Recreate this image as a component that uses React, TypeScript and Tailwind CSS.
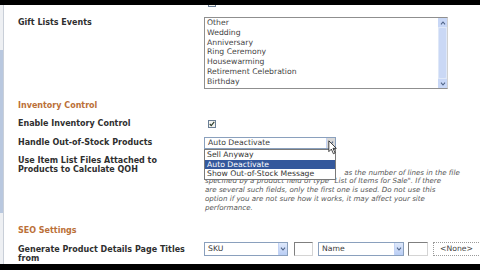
import React from 'react';

const events = ['Other', 'Wedding', 'Anniversary', 'Ring Ceremony', 'Housewarming', 'Retirement Celebration', 'Birthday'];

const font = "font-['DejaVu_Sans',Verdana,sans-serif]";

function Checkbox({ checked = false }: { checked?: boolean }) {
  return (
    <span className="flex h-[8px] w-[8px] items-center justify-center border border-[#6b7f96] bg-[#f4f4f0]">
      {checked && (
        <svg viewBox="0 0 8 8" className="h-[6px] w-[6px]">
          <path d="M1 4 L3 6.2 L7 1.2" fill="none" stroke="#2b3b2b" strokeWidth="1.5" />
        </svg>
      )}
    </span>
  );
}

function ArrowButton({ pressed = false }: { pressed?: boolean }) {
  return (
    <span
      className={`flex w-[9px] items-center justify-center self-stretch border-l border-[#c3d3f5] ${
        pressed ? 'bg-[#d8d8d8]' : 'bg-gradient-to-b from-[#dfe9fb] to-[#b9cdf4]'
      }`}
    >
      <svg viewBox="0 0 8 6" className="h-[4px] w-[6px]">
        <path d="M1 1 L4 4.5 L7 1" fill="none" stroke="#4d6185" strokeWidth="1.6" />
      </svg>
    </span>
  );
}

function Select({ value, className = '', pressed = false }: { value: string; className?: string; pressed?: boolean }) {
  return (
    <div className={`flex border border-[#8aa0bd] bg-white ${className}`}>
      <span className="flex-1 truncate pl-[3px] text-[7.7px] text-[#3a3a3a]">{value}</span>
      <ArrowButton pressed={pressed} />
    </div>
  );
}

export default function App() {
  return (
    <div className={`flex h-[270px] w-[480px] flex-col overflow-hidden bg-black ${font}`}>
      <div className="h-[5px] shrink-0 bg-black" />

      <div className="relative flex min-h-0 flex-1 overflow-hidden bg-white">
        {/* frame edge */}
        <div className="flex w-[4px] shrink-0 flex-col border-r border-[#c9cfd8] bg-[#eef0f3]">
          <div className="h-[45px]" />
          <div className="h-[163px] w-[3px] bg-[#b9c8df]" />
        </div>

        <div className="flex flex-1 flex-col pl-[14px] text-[#2f2f2f]">
          {/* Enable Gift Lists (cut off) */}
          <div className="mt-[-7px] grid grid-cols-[186px_1fr] items-center leading-[10px]">
            <span className="text-[8px] font-bold">Enable Gift Lists</span>
            <span className="pl-[4px]"><Checkbox /></span>
          </div>

          {/* Gift Lists Events */}
          <div className="mt-[9px] grid grid-cols-[186px_1fr]">
            <span className="pt-[1px] text-[8px] font-bold leading-[10px]">Gift Lists Events</span>
            <div className="flex h-[72px] w-[244px] border border-[#8f8f8f] border-r-[#d0d0d0] bg-white">
              <ul className="flex-1 pl-[2px] text-[7.7px] leading-[9.8px] text-[#444]">
                {events.map((e) => (
                  <li key={e}>{e}</li>
                ))}
              </ul>
              <div className="flex w-[9px] flex-col bg-[#dfe8f8]">
                <span className="flex h-[9px] items-center justify-center bg-[#c8d7f6]">
                  <svg viewBox="0 0 8 6" className="h-[4px] w-[6px]">
                    <path d="M1 5 L4 1.5 L7 5" fill="none" stroke="#4d6185" strokeWidth="1.6" />
                  </svg>
                </span>
                <span className="mx-[1px] my-[1px] flex-1 rounded-[1px] bg-[#cad8f5]" />
                <span className="flex h-[9px] items-center justify-center bg-[#c8d7f6]">
                  <svg viewBox="0 0 8 6" className="h-[4px] w-[6px]">
                    <path d="M1 1 L4 4.5 L7 1" fill="none" stroke="#4d6185" strokeWidth="1.6" />
                  </svg>
                </span>
              </div>
            </div>
          </div>

          {/* Inventory Control */}
          <div className="mt-[12px] text-[8px] font-bold leading-[10px] text-[#bb7038]">Inventory Control</div>

          <div className="mt-[8px] grid grid-cols-[186px_1fr] items-center leading-[10px]">
            <span className="text-[8px] font-bold">Enable Inventory Control</span>
            <span className="pl-[4px]"><Checkbox checked /></span>
          </div>

          <div className="mt-[8px] grid grid-cols-[186px_1fr]">
            <span className="text-[8px] font-bold leading-[12px]">Handle Out-of-Stock Products</span>
            <div className="relative">
              <Select value="Auto Deactivate" className="h-[12px] w-[132px] leading-[10px]" pressed />
              <ul className="absolute left-0 top-[12px] z-10 w-[132px] border border-[#7a7a7a] bg-white text-[7.7px] leading-[9.5px] text-[#333]">
                <li className="pl-[2px]">Sell Anyway</li>
                <li className="bg-[#34589c] pl-[2px] text-white">Auto Deactivate</li>
                <li className="pl-[2px]">Show Out-of-Stock Message</li>
              </ul>
              <svg viewBox="0 0 12 18" className="absolute left-[124px] top-[3px] z-20 h-[15px] w-[10px]">
                <path d="M1 1 L1 14 L4 11 L6.5 16.5 L8.5 15.5 L6 10 L10 10 Z" fill="white" stroke="#222" strokeWidth="1" strokeLinejoin="round" />
              </svg>
            </div>
          </div>

          <div className="mt-[7px] grid grid-cols-[186px_1fr]">
            <span className="text-[8px] font-bold leading-[9px]">
              Use Item List Files Attached to
              <br />
              Products to Calculate QOH
            </span>
            <p className="whitespace-nowrap pl-[1px] pt-[12.5px] text-[7.1px] italic leading-[8.8px] text-[#555]">
              <span className="inline-block w-[137px] overflow-hidden align-top">If checked, QOH is computed</span> as the number of lines in the file
              <br />
              specified by a product field of type "List of Items for Sale". If there
              <br />
              are several such fields, only the first one is used. Do not use this
              <br />
              option if you are not sure how it works, it may affect your site
              <br />
              performance.
            </p>
          </div>

          {/* SEO Settings */}
          <div className="mt-[14px] text-[8px] font-bold leading-[10px] text-[#bb7038]">SEO Settings</div>

          <div className="mt-[6px] grid grid-cols-[186px_1fr]">
            <span className="pt-[3px] text-[8px] font-bold leading-[9px]">
              Generate Product Details Page Titles
              <br />
              from
            </span>
            <div className="flex items-start">
              <Select value="SKU" className="h-[14px] w-[84px] leading-[12px]" />
              <span className="ml-[6px] h-[14px] w-[19px] border border-[#7f7f7f] border-b-[#d4d4d4] border-r-[#d4d4d4]" />
              <Select value="Name" className="ml-[5px] h-[14px] w-[86px] leading-[12px]" />
              <span className="ml-[4px] h-[14px] w-[20px] border border-[#7f7f7f] border-b-[#d4d4d4] border-r-[#d4d4d4]" />
              <div className="ml-[5px] h-[14px] w-[60px] border border-dotted border-[#9a9a9a] pl-[6px] text-[7.7px] leading-[12px] text-[#444]">
                &lt;None&gt;
              </div>
            </div>
          </div>
        </div>
      </div>

      <div className="h-[6px] shrink-0 bg-black" />
    </div>
  );
}
